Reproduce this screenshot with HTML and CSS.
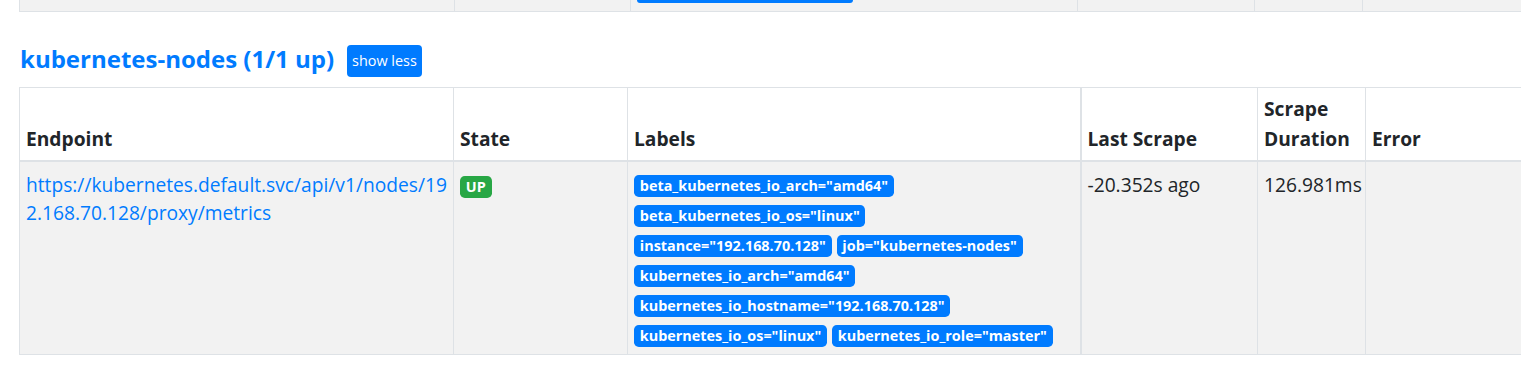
FILE: index.html
```html
<!DOCTYPE html>
<html lang="en">
<head>
  <meta charset="UTF-8">
  <title>Targets</title>
  <link rel="stylesheet" href="styles.css">
</head>
<body>

<div class="page">
  <table class="targets prev-table">
    <colgroup>
      <col style="width: 435px">
      <col style="width: 176px">
      <col style="width: 447px">
      <col style="width: 177px">
      <col style="width: 108px">
      <col style="width: 300px">
    </colgroup>
    <tbody>
      <tr>
        <td></td>
        <td></td>
        <td><span class="label-cut"></span></td>
        <td></td>
        <td></td>
        <td></td>
      </tr>
    </tbody>
  </table>

  <h2 class="job-title">
    <a href="#kubernetes-nodes">kubernetes-nodes (1/1 up)</a>
    <button class="toggle">show less</button>
  </h2>

  <table class="targets main-table">
    <colgroup>
      <col style="width: 434px">
      <col style="width: 174px">
      <col style="width: 453px">
      <col style="width: 177px">
      <col style="width: 108px">
      <col style="width: 300px">
    </colgroup>
    <thead>
      <tr>
        <th>Endpoint</th>
        <th>State</th>
        <th>Labels</th>
        <th class="split">Last Scrape</th>
        <th>Scrape Duration</th>
        <th>Error</th>
      </tr>
    </thead>
    <tbody>
      <tr>
        <td class="endpoint"><a href="#">https://kubernetes.default.svc/api/v1/nodes/192.168.70.128/proxy/metrics</a></td>
        <td><span class="state up">UP</span></td>
        <td>
          <div class="labels">
            <div class="label-row"><span class="label">beta_kubernetes_io_arch="amd64"</span></div>
            <div class="label-row"><span class="label">beta_kubernetes_io_os="linux"</span></div>
            <div class="label-row"><span class="label">instance="192.168.70.128"</span><span class="label">job="kubernetes-nodes"</span></div>
            <div class="label-row"><span class="label">kubernetes_io_arch="amd64"</span></div>
            <div class="label-row"><span class="label">kubernetes_io_hostname="192.168.70.128"</span></div>
            <div class="label-row"><span class="label">kubernetes_io_os="linux"</span><span class="label">kubernetes_io_role="master"</span></div>
          </div>
        </td>
        <td class="split">-20.352s ago</td>
        <td>126.981ms</td>
        <td></td>
      </tr>
    </tbody>
  </table>
</div>

</body>
</html>
```

FILE: styles.css
```css
html, body {
  overflow: hidden;
}
body {
  margin: 0;
  font-family: 'Segoe UI', 'Open Sans', sans-serif;
  font-size: 19.2px;
  line-height: 28.8px;
  color: #212529;
  background-color: #fff;
}
.page {
  padding: 0 0 0 19px;
}
a {
  color: #007bff;
  text-decoration: none;
}

.targets {
  table-layout: fixed;
  border-collapse: collapse;
}
.targets th, .targets td {
  border: 1px solid #dee2e6;
  text-align: left;
}
.targets th {
  padding: 6px;
  line-height: 30px;
  vertical-align: bottom;
  font-weight: 700;
  border-bottom-width: 2px;
}
.targets td {
  vertical-align: top;
  background-color: #f2f2f2;
}
.targets .split {
  border-left-width: 2px;
}

/* tail of the previous job's table */
.prev-table {
  width: 1643px;
}
.prev-table td {
  height: 11px;
  padding: 0 6px;
  border-top: none;
  line-height: 0;
}
.label-cut {
  display: block;
  width: 216px;
  height: 3px;
  background-color: #007bff;
  border-radius: 0 0 4.8px 4.8px;
}

.main-table {
  width: 1646px;
}
.main-table td {
  padding: 8.5px 6px 7px;
}

.job-title {
  margin: 29px 0 10px 1px;
  font-size: 24px;
  line-height: 36px;
  font-weight: 700;
  display: flex;
  align-items: center;
  gap: 13px;
}
.toggle {
  margin-top: 4px;
  font-family: inherit;
  font-size: 14.4px;
  line-height: 20px;
  padding: 5px 5px;
  border: none;
  border-radius: 4px;
  background-color: #007bff;
  color: #fff;
  height: 32px;
}
.endpoint {
  word-break: break-all;
}
.state {
  display: inline-block;
  margin-top: 5px;
  padding: 3.6px 5.8px;
  font-size: 14.4px;
  line-height: 14.4px;
  font-weight: 700;
  color: #fff;
  border-radius: 4.8px;
}
.up {
  background-color: #28a745;
}
.labels {
  display: flex;
  flex-direction: column;
  gap: 7.5px;
  padding-top: 4.5px;
}
.label-row {
  display: flex;
  gap: 5px;
}
.label {
  display: inline-block;
  padding: 4px 5.8px;
  font-size: 14.4px;
  line-height: 14.4px;
  font-weight: 700;
  color: #fff;
  background-color: #007bff;
  border-radius: 4.8px;
  white-space: nowrap;
}
```
